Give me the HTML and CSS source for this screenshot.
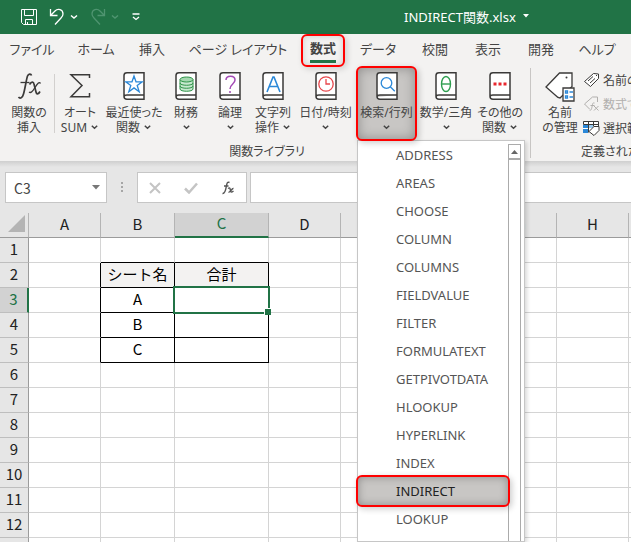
FILE: index.html
```html
<!DOCTYPE html>
<html lang="ja">

<head>
    <meta charset="UTF-8">
    <title>INDIRECT関数.xlsx</title>
    <link rel="stylesheet" href="styles.css">
</head>

<body>
    <div class="app">
        <header class="title-bar">
            <div class="quick-tools">
                <button class="tool" aria-label="上書き保存">
                    <svg width="16" height="16" viewBox="0 0 16 16" fill="none" stroke="currentColor">
                        <path d="M.5 .5h15v15h-13l-2-2zM3.5 .5v6h9v-6M4.500 15.500v-5h7v5M6.500 13v2.500" />
                    </svg>
                </button>
                <button class="tool" aria-label="元に戻す">
                    <svg width="16" height="18" viewBox="0 0 16 18" fill="none" stroke="currentColor" stroke-width="1.300">
                        <path d="M1.500 1v6.500h7M1.500 7.500L6 3c3-3 8-1.500 8 3 0 2-1 3-2 4l-6 6.500" />
                    </svg>
                </button>
                <button class="tool" aria-label="元に戻す一覧">
                    <svg width="8" height="6" viewBox="0 0 8 6" fill="none" stroke="currentColor" stroke-width="1.500">
                        <path d="M1 1.500l3 2.500 3-2.500" />
                    </svg>
                </button>
                <button class="tool faded" aria-label="やり直し">
                    <svg width="16" height="18" viewBox="0 0 16 18" fill="none" stroke="currentColor" stroke-width="1.300">
                        <path d="M14.500 1v6.500h-7M14.500 7.500L10 3C7 0 2 1.500 2 6c0 2 1 3 2 4l6 6.500" />
                    </svg>
                </button>
                <button class="tool faded" aria-label="やり直し一覧">
                    <svg width="8" height="6" viewBox="0 0 8 6" fill="none" stroke="currentColor" stroke-width="1.500">
                        <path d="M1 1.500l3 2.500 3-2.500" />
                    </svg>
                </button>
                <button class="tool customize" aria-label="クイック アクセスのカスタマイズ">
                    <svg width="8" height="8" viewBox="0 0 8 8" fill="none" stroke="currentColor" stroke-width="1.300">
                        <path d="M.5 1h7M1 4l3 2.500 3-2.500" />
                    </svg>
                </button>
            </div>
            <button class="file-name">INDIRECT関数.xlsx
                <svg width="6" height="4" viewBox="0 0 6 4" fill="currentColor"><path d="M0 0h6L3 3.500z" /></svg>
            </button>
        </header>

        <nav class="tabs">
            <button>ファイル</button>
            <button>ホーム</button>
            <button>挿入</button>
            <button>ページ レイアウト</button>
            <button class="active"><span>数式</span></button>
            <button>データ</button>
            <button>校閲</button>
            <button>表示</button>
            <button>開発</button>
            <button>ヘルプ</button>
        </nav>

        <div class="ribbon">
            <section class="library">
                <div class="library-buttons">
                    <button class="command">
                        <svg width="30" height="28" viewBox="0 0 30 28" fill="none" stroke="#3b3a39">
                            <path d="M17.500 3.500c-.5-2-3-2-4 .5-1 2.500-2.500 13-4 18-1 4-3.500 5-5 3" stroke-width="1.700" />
                            <path d="M6.500 10.500h9" stroke-width="1.300" />
                            <path d="M15.500 12.500c2-3 4-3 4.500-.5l2 8c.5 2.500 2.500 2.500 4-.5" stroke-width="1.700" />
                            <path d="M26.500 11.500c-1.500-2-3 0-5.500 4s-4 6-6 4.500" stroke-width="1.300" />
                        </svg>
                        <span>関数の</span>
                        <span>挿入</span>
                    </button>
                    <span class="divider"></span>
                    <button class="command">
                        <svg width="22" height="28" viewBox="0 0 22 28" fill="none" stroke="#3b3a39" stroke-width="1.500">
                            <path d="M20.500 6V2.800H2L13 13.500 2 24.700h18.500V21" />
                        </svg>
                        <span>オート</span>
                        <span>SUM <svg class="chevron" width="7" height="5" viewBox="0 0 7 5"><path d="M.8 .8l2.700 2.500L6.200 .8" /></svg></span>
                    </button>
                    <button class="command">
                        <svg class="book" width="22" height="28" viewBox="0 0 22 28">
                            <path class="cover" d="M21 .8H4C2 .8 1 2 1 3.500v21C1 26 2 27.200 4 27.200h17zM1 25c0-1.500 1-2 3-2h17" />
                            <path stroke="#2b88d8" stroke-width="1.300" d="M11 4l2 5.800h6.200l-5 3.700 2 6.200-5.200-3.800-5.200 3.800 2-6.200-5-3.700H9z" />
                        </svg>
                        <span>最近使った</span>
                        <span>関数 <svg class="chevron" width="7" height="5" viewBox="0 0 7 5"><path d="M.8 .8l2.700 2.500L6.200 .8" /></svg></span>
                    </button>
                    <button class="command">
                        <svg class="book" width="22" height="28" viewBox="0 0 22 28">
                            <path class="cover" d="M21 .8H4C2 .8 1 2 1 3.500v21C1 26 2 27.200 4 27.200h17zM1 25c0-1.500 1-2 3-2h17" />
                            <path fill="#c7e8cf" stroke="#2e9348" d="M5 7.500v9.500c0 3 13 3 13 0V7.500" />
                            <path stroke="#2e9348" d="M5 11c0 3 13 3 13 0M5 14c0 3 13 3 13 0" />
                            <ellipse fill="#a5d8b0" stroke="#2e9348" cx="11.500" cy="7.500" rx="6.500" ry="2.500" />
                        </svg>
                        <span>財務</span>
                        <span><svg class="chevron" width="7" height="5" viewBox="0 0 7 5"><path d="M.8 .8l2.700 2.500L6.200 .8" /></svg></span>
                    </button>
                    <button class="command">
                        <svg class="book" width="22" height="28" viewBox="0 0 22 28">
                            <path class="cover" d="M21 .8H4C2 .8 1 2 1 3.500v21C1 26 2 27.200 4 27.200h17zM1 25c0-1.500 1-2 3-2h17" />
                            <path stroke="#a349b5" stroke-width="1.500" d="M7 8c0-5 9-5 9 0 0 4-5 4-5 9M11 19v2" />
                        </svg>
                        <span>論理</span>
                        <span><svg class="chevron" width="7" height="5" viewBox="0 0 7 5"><path d="M.8 .8l2.700 2.500L6.200 .8" /></svg></span>
                    </button>
                    <button class="command">
                        <svg class="book" width="22" height="28" viewBox="0 0 22 28">
                            <path class="cover" d="M21 .8H4C2 .8 1 2 1 3.500v21C1 26 2 27.200 4 27.200h17zM1 25c0-1.500 1-2 3-2h17" />
                            <path stroke="#2b88d8" stroke-width="1.600" d="M5 20l6-15h1l6 15M7 14.500h9" />
                        </svg>
                        <span>文字列</span>
                        <span>操作 <svg class="chevron" width="7" height="5" viewBox="0 0 7 5"><path d="M.8 .8l2.700 2.500L6.200 .8" /></svg></span>
                    </button>
                    <button class="command">
                        <svg class="book" width="22" height="28" viewBox="0 0 22 28">
                            <path class="cover" d="M21 .8H4C2 .8 1 2 1 3.500v21C1 26 2 27.200 4 27.200h17zM1 25c0-1.500 1-2 3-2h17" />
                            <circle stroke="#e8474c" stroke-width="1.300" cx="11" cy="12" r="7.200" />
                            <path stroke="#e8474c" stroke-width="1.300" d="M11 7v5h4" />
                        </svg>
                        <span>日付/時刻</span>
                        <span><svg class="chevron" width="7" height="5" viewBox="0 0 7 5"><path d="M.8 .8l2.700 2.500L6.200 .8" /></svg></span>
                    </button>
                    <div class="menu-anchor">
                        <button class="command open" aria-expanded="true">
                            <svg class="book" width="22" height="28" viewBox="0 0 22 28">
                                <path class="cover" d="M21 .8H4C2 .8 1 2 1 3.500v21C1 26 2 27.200 4 27.200h17zM1 25c0-1.500 1-2 3-2h17" />
                                <circle stroke="#2b88d8" stroke-width="1.300" cx="10.500" cy="11" r="5.300" />
                                <path stroke="#2b88d8" stroke-width="1.300" d="M14.300 14.800l4.500 4.500" />
                            </svg>
                            <span>検索/行列</span>
                            <span><svg class="chevron" width="7" height="5" viewBox="0 0 7 5"><path d="M.8 .8l2.700 2.500L6.200 .8" /></svg></span>
                        </button>
                        <div class="menu">
                            <div class="menu-items">
                                <button>ADDRESS</button>
                                <button>AREAS</button>
                                <button>CHOOSE</button>
                                <button>COLUMN</button>
                                <button>COLUMNS</button>
                                <button>FIELDVALUE</button>
                                <button>FILTER</button>
                                <button>FORMULATEXT</button>
                                <button>GETPIVOTDATA</button>
                                <button>HLOOKUP</button>
                                <button>HYPERLINK</button>
                                <button>INDEX</button>
                                <button class="selected">INDIRECT</button>
                                <button>LOOKUP</button>
                            </div>
                            <div class="scrollbar">
                                <button aria-label="上へスクロール">
                                    <svg width="7" height="4" viewBox="0 0 7 4" fill="#666"><path d="M0 4L3.500 0 7 4z" /></svg>
                                </button>
                            </div>
                        </div>
                    </div>
                    <button class="command">
                        <svg class="book" width="22" height="28" viewBox="0 0 22 28">
                            <path class="cover" d="M21 .8H4C2 .8 1 2 1 3.500v21C1 26 2 27.200 4 27.200h17zM1 25c0-1.500 1-2 3-2h17" />
                            <ellipse stroke="#2e9e4f" stroke-width="1.400" cx="11" cy="12" rx="4.500" ry="7.500" />
                            <path stroke="#2e9e4f" stroke-width="1.400" d="M6.500 12h9" />
                        </svg>
                        <span>数学/三角</span>
                        <span><svg class="chevron" width="7" height="5" viewBox="0 0 7 5"><path d="M.8 .8l2.700 2.500L6.200 .8" /></svg></span>
                    </button>
                    <button class="command">
                        <svg class="book" width="22" height="28" viewBox="0 0 22 28">
                            <path class="cover" d="M21 .8H4C2 .8 1 2 1 3.500v21C1 26 2 27.200 4 27.200h17zM1 25c0-1.500 1-2 3-2h17" />
                            <path fill="#e8262d" d="M4.500 10.500h3v3h-3zM9.500 10.500h3v3h-3zM14.500 10.500h3v3h-3z" />
                        </svg>
                        <span>その他の</span>
                        <span>関数 <svg class="chevron" width="7" height="5" viewBox="0 0 7 5"><path d="M.8 .8l2.700 2.500L6.200 .8" /></svg></span>
                    </button>
                </div>
                <h2>関数ライブラリ</h2>
            </section>

            <section class="names">
                <div class="names-buttons">
                    <button class="command">
                        <svg width="32" height="30" viewBox="0 0 32 30" fill="none" stroke="#3b3a39" stroke-width="1.300">
                            <path fill="#fff" d="M14 25.500L2 15 15.500 1H28v13.500L16 26z" />
                            <circle cx="22.500" cy="5.500" r="1" fill="#3b3a39" stroke="none" />
                            <path fill="#fff" d="M19 16h11v13H19z" />
                            <path stroke="#2b88d8" d="M21.500 19h2v2h-2zM21.500 24h2v2h-2zM25.500 20H29M25.500 25H29" />
                        </svg>
                        <span>名前</span>
                        <span>の管理</span>
                    </button>
                    <div class="small-commands">
                        <button>
                            <svg width="17" height="16" viewBox="0 0 17 16" fill="none" stroke="#3b3a39">
                                <path fill="#fff" d="M1.500 9.500l9-8 5 .5v4.500l-8 8z" />
                                <path d="M5 9l5-4.500M7 11l5-4.500M13.500 3v1" />
                            </svg>
                            名前の定義
                        </button>
                        <button disabled>
                            <svg width="17" height="16" viewBox="0 0 17 16" fill="none" stroke="#b1afad">
                                <path d="M6.500 13l-5-5 8-7h5v5M11.500 7c-2-1-2 2-2.500 4s-1 4-2.500 3M7.500 9.500h4M11 10l4.500 4.500M15.500 10L11 14.500" />
                            </svg>
                            数式で使用
                        </button>
                        <button>
                            <svg width="17" height="16" viewBox="0 0 17 16" fill="none" stroke="#3b3a39">
                                <path fill="#fff" stroke="none" d="M1 2h14v10H1z" />
                                <path fill="#2b88d8" stroke="none" d="M0 5h5v8H0z" />
                                <path fill="#9ccbf0" stroke="none" d="M6 5h4v3H6z" />
                                <path d="M.5 4.500v-3h15v5M.5 4.500h15M5.500 1.500v11M10.500 1.500v5" />
                                <path stroke="#fff" d="M0 8.500h5" />
                                <path fill="#fff" d="M6 11.500l5-5h5v4l-5 5z" />
                            </svg>
                            選択範囲から作成
                        </button>
                    </div>
                </div>
                <h2>定義された名前</h2>
            </section>
        </div>

        <div class="formula-bar">
            <label class="name-box">
                <input type="text" value="C3" aria-label="名前ボックス">
                <svg width="8" height="5" viewBox="0 0 8 5" fill="#777"><path d="M0 0h8L4 4.500z" /></svg>
            </label>
            <svg class="grip" width="3" height="13" viewBox="0 0 3 13" fill="#a6a6a6"><path d="M0 1h2v2H0zM0 5h2v2H0zM0 9h2v2H0z" /></svg>
            <div class="entry-buttons">
                <button aria-label="キャンセル">
                    <svg width="12" height="12" viewBox="0 0 12 12" fill="none" stroke="#c4c4c4" stroke-width="2"><path d="M1 1l10 10M11 1L1 11" /></svg>
                </button>
                <button aria-label="入力">
                    <svg width="14" height="12" viewBox="0 0 14 12" fill="none" stroke="#c4c4c4" stroke-width="2.500"><path d="M1 6.500l4 4L13 1.500" /></svg>
                </button>
                <button aria-label="関数の挿入">
                    <svg width="14" height="14" viewBox="0 0 14 14" fill="none" stroke="#555" stroke-width="1.400">
                        <path d="M8.500 1.500C6.500 .5 6 2 5.500 4.500S4.500 13 1.500 12.500M3 5h4.500" />
                        <path d="M7 7.500c2-1.500 2 0 2.500 2s1 2 3 .5M12.500 7.500c-2-.5-3 4.500-5 3.500" />
                    </svg>
                </button>
            </div>
            <input class="formula" type="text" aria-label="数式バー">
        </div>

        <main class="sheet">
            <table>
                <colgroup>
                    <col class="col-head">
                    <col>
                    <col class="col-b">
                    <col class="col-c">
                    <col><col><col><col><col><col>
                </colgroup>
                <thead>
                    <tr>
                        <th class="corner"><svg width="17" height="17" viewBox="0 0 17 17" fill="#b4b4b4"><path d="M17 0v17H0z" /></svg></th>
                        <th>A</th><th>B</th><th class="current">C</th><th>D</th><th>E</th><th>F</th><th>G</th><th>H</th><th>I</th>
                    </tr>
                </thead>
                <tbody>
                    <tr><th>1</th><td></td><td class="edge-bottom"></td><td class="edge-bottom"></td><td></td><td></td><td></td><td></td><td></td><td></td></tr>
                    <tr><th>2</th><td class="edge-right"></td><td class="boxed heading">シート名</td><td class="boxed heading">合計</td><td></td><td></td><td></td><td></td><td></td><td></td></tr>
                    <tr><th class="current">3</th><td class="edge-right"></td><td class="boxed">A</td><td class="boxed active-cell"></td><td></td><td></td><td></td><td></td><td></td><td></td></tr>
                    <tr><th>4</th><td class="edge-right"></td><td class="boxed">B</td><td class="boxed"></td><td></td><td></td><td></td><td></td><td></td><td></td></tr>
                    <tr><th>5</th><td class="edge-right"></td><td class="boxed">C</td><td class="boxed"></td><td></td><td></td><td></td><td></td><td></td><td></td></tr>
                    <tr><th>6</th><td></td><td></td><td></td><td></td><td></td><td></td><td></td><td></td><td></td></tr>
                    <tr><th>7</th><td></td><td></td><td></td><td></td><td></td><td></td><td></td><td></td><td></td></tr>
                    <tr><th>8</th><td></td><td></td><td></td><td></td><td></td><td></td><td></td><td></td><td></td></tr>
                    <tr><th>9</th><td></td><td></td><td></td><td></td><td></td><td></td><td></td><td></td><td></td></tr>
                    <tr><th>10</th><td></td><td></td><td></td><td></td><td></td><td></td><td></td><td></td><td></td></tr>
                    <tr><th>11</th><td></td><td></td><td></td><td></td><td></td><td></td><td></td><td></td><td></td></tr>
                    <tr><th>12</th><td></td><td></td><td></td><td></td><td></td><td></td><td></td><td></td><td></td></tr>
                    <tr><th></th><td></td><td></td><td></td><td></td><td></td><td></td><td></td><td></td><td></td></tr>
                </tbody>
            </table>
        </main>
    </div>
</body>

</html>
```

FILE: styles.css
```css
* {
    box-sizing: border-box;
}

body {
    margin: 0;
    font-family: "Noto Sans", "Noto Sans CJK JP", sans-serif;
    font-size: 12px;
    color: #444;
}

button {
    padding: 0;
    border: none;
    background: none;
    font: inherit;
    color: inherit;
    white-space: nowrap;
}

input {
    min-width: 0;
    border: none;
    outline: none;
    font: inherit;
    color: inherit;
}

h2 {
    margin: 0;
    font-size: 12px;
    font-weight: 400;
    line-height: 16px;
    text-align: center;
    white-space: nowrap;
}

.app {
    display: flex;
    flex-direction: column;
    height: 100vh;
    overflow: hidden;
}

/* title bar */
.title-bar {
    display: flex;
    flex: none;
    align-items: center;
    height: 34px;
    padding-left: 21px;
    background: #217346;
    color: #fff;
}

.quick-tools {
    display: flex;
    align-items: center;
    flex: none;
    width: 383px;
}

.tool {
    display: flex;
    margin-right: 5px;
}

.tool:first-child,
.tool:nth-child(3) {
    margin-right: 12px;
}

.faded {
    color: #4f9470;
}

.customize {
    margin-left: 8px;
}

.file-name {
    display: flex;
    align-items: center;
    gap: 7px;
    padding-bottom: 2px;
    font-size: 13px;
}

/* tabs */
.tabs {
    display: grid;
    flex: none;
    grid-template-columns: 64px 64px 48px 124px 46px 64px 50px 56px 50px 62px;
    height: 32px;
    background: #f3f2f1;
    font-size: 13px;
    font-feature-settings: "palt";
}

.tabs button {
    padding-bottom: 4px;
}

.tabs .active {
    position: relative;
    display: flex;
    justify-content: center;
    align-items: flex-start;
    height: 33px;
    margin: 0 1px;
    padding: 3px 0 0;
    border: 2px solid #f00;
    border-radius: 6px;
    box-shadow: 2px 2px 6px rgba(0, 0, 0, 0.15), inset 0 0 6px rgba(0, 0, 0, 0.15);
    font-weight: 700;
}

.tabs .active span {
    height: 24px;
    border-bottom: 3px solid #217346;
    line-height: 19px;
}

/* ribbon */
.ribbon {
    display: flex;
    flex: none;
    height: 95px;
    background: #f3f2f1;
    font-feature-settings: "palt";
}

.library {
    flex: none;
    width: 530px;
    padding-left: 4px;
}

.library-buttons {
    display: grid;
    grid-template-columns: 50px 1px 50px 58px 46px 42px 44px 61px 61px 58px 50px;
    height: 78px;
}

.command {
    display: flex;
    flex-direction: column;
    align-items: center;
    padding-top: 6px;
    line-height: 15px;
}

.command > svg {
    flex: none;
    height: 28px;
    margin-bottom: 5px;
}

.command > span {
    height: 15px;
}

.book {
    fill: none;
}

.book .cover {
    fill: #fff;
    stroke: #3b3a39;
    stroke-width: 1.5px;
}

.chevron {
    margin: 0 1px 2px;
    fill: none;
    stroke: #444;
    stroke-width: 1.5px;
}

.divider {
    height: 59px;
    margin-top: 8px;
    background: #d2d0ce;
}

.menu-anchor {
    position: relative;
}

.open {
    width: 61px;
    height: 75px;
    padding-top: 4px;
    border: 2px solid #f00;
    border-radius: 6px;
    background: #c8c6c4;
    box-shadow: 2px 2px 6px rgba(0, 0, 0, 0.2), inset 0 0 12px rgba(0, 0, 0, 0.3);
}

/* function menu */
.menu {
    position: absolute;
    z-index: 1;
    top: 74px;
    left: 1px;
    display: flex;
    width: 168px;
    height: calc(100vh - 140px);
    padding-right: 3px;
    border: 1px solid #c6c6c6;
    background: #fff;
    box-shadow: 2px 2px 4px rgba(0, 0, 0, 0.15);
    font-size: 13px;
}

.menu-anchor .open {
    position: relative;
    z-index: 2;
}

.menu-items {
    flex: 1;
}

.menu-items button {
    display: block;
    width: 100%;
    height: 28px;
    padding-left: 38px;
    color: #555;
    text-align: left;
}

.menu-items .selected {
    position: relative;
    width: 154px;
    height: 32px;
    margin: -2px;
    border: 2px solid #f00;
    border-radius: 6px;
    background: #c8c6c4;
    box-shadow: 2px 2px 6px rgba(0, 0, 0, 0.2), inset 0 0 8px rgba(0, 0, 0, 0.3);
    color: #222;
}

.scrollbar {
    width: 15px;
    margin-top: 3px;
    border: 1px solid #ababab;
    border-bottom: none;
}

.scrollbar button {
    display: flex;
    justify-content: center;
    align-items: center;
    width: 100%;
    height: 15px;
    border-bottom: 2px solid #ababab;
}

/* defined names group */
.names {
    flex: 1;
    min-width: 0;
    overflow: hidden;
    border-left: 1px solid #c8c6c4;
    margin: 2px 0 3px;
}

.names h2 {
    padding-left: 50px;
    text-align: left;
}

.names-buttons {
    display: flex;
    height: 76px;
}

.names-buttons .command {
    flex: none;
    width: 52px;
    padding: 4px 0 0 6px;
}

.names-buttons .command > svg {
    height: 30px;
    margin-bottom: 3px;
}

.small-commands {
    display: flex;
    flex-direction: column;
}

.small-commands button {
    display: flex;
    align-items: center;
    gap: 3px;
    height: 24px;
}

.small-commands button:disabled {
    color: #b1afad;
}

/* formula bar */
.formula-bar {
    display: flex;
    flex: none;
    height: 52px;
    padding: 11px 0 10px 5px;
    background: linear-gradient(#cfcfcf, #e6e6e6 6px);
    color: #444;
}

.name-box {
    display: flex;
    align-items: center;
    width: 102px;
    padding: 0 6px;
    border: 1px solid #c6c6c6;
    background: #fff;
    font-size: 14px;
}

.name-box input {
    flex: 1;
    font-family: "Noto Sans CJK JP", sans-serif;
}

.grip {
    margin: 9px 13px 0 14px;
}

.entry-buttons {
    display: flex;
    justify-content: space-around;
    width: 110px;
    border: 1px solid #c6c6c6;
    background: #fff;
}

.entry-buttons button {
    display: flex;
    align-items: center;
}

.formula {
    flex: 1;
    margin-left: 3px;
    border: 1px solid #c6c6c6;
    border-right: none;
    background: #fff;
}

/* sheet */
.sheet {
    flex: 1;
    min-height: 0;
    overflow: hidden;
}

table {
    width: 701px;
    border-spacing: 0;
    table-layout: fixed;
    font-family: "Noto Sans CJK JP", sans-serif;
    font-size: 15px;
    line-height: 20px;
    color: #000;
}

col {
    width: 72px;
}

.col-head {
    width: 29px;
}

.col-b {
    width: 74px;
}

.col-c {
    width: 94px;
}

th,
td {
    height: 25px;
    padding: 0 0 3px;
    border-right: 1px solid #d4d4d4;
    border-bottom: 1px solid #d4d4d4;
    text-align: center;
    white-space: nowrap;
}

th {
    background: #e6e6e6;
    font-weight: 400;
    color: #222;
}

thead th {
    border-right-color: #b4b4b4;
    border-bottom-color: #9b9b9b;
}

tbody th {
    border-right-color: #9b9b9b;
    border-bottom-color: #bebebe;
}

.corner svg {
    display: block;
    margin-left: 8px;
}

thead .current {
    border-bottom: 2px solid #217346;
    background: #d2d2d2;
    color: #217346;
}

tbody .current {
    border-right: 2px solid #217346;
    background: #d2d2d2;
    color: #217346;
}

.edge-bottom {
    border-bottom-color: #000;
}

.edge-right {
    border-right-color: #000;
}

.boxed {
    border-color: #000;
}

.heading {
    background: #f3f2f1;
}

.active-cell {
    position: relative;
}

/* selection frame with its fill handle */
.active-cell::before {
    content: "";
    position: absolute;
    inset: -2px;
    border: 2px solid #217346;
}

.active-cell::after {
    content: "";
    position: absolute;
    right: -3px;
    bottom: -3px;
    width: 6px;
    height: 6px;
    border-top: 1px solid #fff;
    border-left: 1px solid #fff;
    background: #217346;
}
```
